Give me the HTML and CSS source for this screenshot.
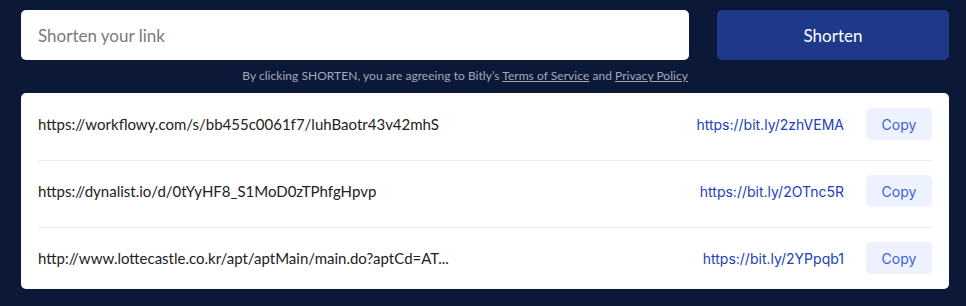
FILE: index.html
```html
<!DOCTYPE html>
<html>
<head>
<meta charset="utf-8">
<link rel="stylesheet" href="styles.css">
</head>
<body>
<div class="page">
  <form class="shorten-form">
    <div class="field">
      <input class="link-input" type="text" placeholder="Shorten your link">
      <p class="terms">By clicking SHORTEN, you are agreeing to Bitly’s <a href="#">Terms of Service</a> and <a href="#">Privacy Policy</a></p>
    </div>
    <button class="shorten-btn" type="button">Shorten</button>
  </form>
  <div class="results">
    <div class="row">
      <span class="long">https://workflowy.com/s/bb455c0061f7/luhBaotr43v42mhS</span>
      <a class="short" href="#">https://bit.ly/2zhVEMA</a>
      <button class="copy" type="button">Copy</button>
    </div>
    <div class="row">
      <span class="long">https://dynalist.io/d/0tYyHF8_S1MoD0zTPhfgHpvp</span>
      <a class="short" href="#">https://bit.ly/2OTnc5R</a>
      <button class="copy" type="button">Copy</button>
    </div>
    <div class="row">
      <span class="long">http://www.lottecastle.co.kr/apt/aptMain/main.do?aptCd=AT...</span>
      <a class="short" href="#">https://bit.ly/2YPpqb1</a>
      <button class="copy" type="button">Copy</button>
    </div>
  </div>
</div>
</body>
</html>
```

FILE: styles.css
```css
html, body {
  margin: 0;
  padding: 0;
  background: #0c1838;
}
body {
  font-family: Lato, "Open Sans", sans-serif;
}
.page {
  padding: 10px 17px 0 21px;
}
.shorten-form {
  display: flex;
  gap: 28px;
  margin: 0;
}
.field {
  flex: 1;
  display: flex;
  flex-direction: column;
}
.link-input {
  height: 50px;
  box-sizing: border-box;
  border: none;
  border-radius: 5px;
  background: #fff;
  padding: 0 17px;
  font-family: Lato, sans-serif;
  font-size: 17px;
  color: #333;
  outline: none;
}
.link-input::placeholder {
  color: #7a7a7a;
}
.terms {
  margin: 8px 1px 0 0;
  text-align: right;
  font-size: 12px;
  letter-spacing: 0.04px;
  line-height: 16px;
  color: #a2a8b8;
}
.terms a {
  color: #a2a8b8;
}
.shorten-btn {
  width: 232px;
  height: 50px;
  border: none;
  border-radius: 5px;
  background: #1e398a;
  color: #ffffff;
  font-family: Lato, sans-serif;
  font-size: 17px;
  font-weight: 400;
}
.results {
  margin-top: 9px;
  background: #fff;
  border-radius: 5px;
  padding: 0 17px;
}
.row {
  display: flex;
  align-items: center;
  padding: 15px 0;
}
.row + .row {
  margin-top: 5px;
  padding-top: 14px;
  border-top: 1px solid #ececec;
}
.long {
  flex: 1;
  font-size: 15px;
  color: #222;
}
.short {
  font-family: Inter, sans-serif;
  font-size: 14px;
  color: #2041b8;
  text-decoration: none;
  margin-right: 22px;
}
.copy {
  width: 66px;
  height: 32px;
  border: none;
  border-radius: 5px;
  background: #edf2fe;
  color: #3d5fd6;
  font-family: Inter, sans-serif;
  font-size: 14px;
}
```
